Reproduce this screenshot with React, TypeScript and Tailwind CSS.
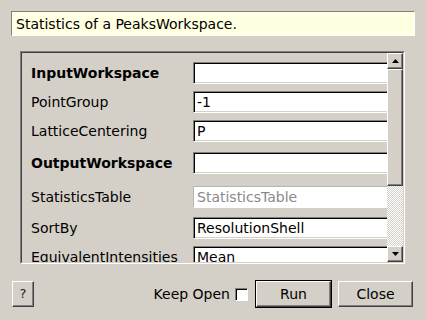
const rows = [
  { label: 'InputWorkspace', bold: true, value: '', disabled: false, mt: 'mt-[9px]' },
  { label: 'PointGroup', bold: false, value: '-1', disabled: false, mt: 'mt-[7px]' },
  { label: 'LatticeCentering', bold: false, value: 'P', disabled: false, mt: 'mt-[7px]' },
  { label: 'OutputWorkspace', bold: true, value: '', disabled: false, mt: 'mt-[10px]' },
  { label: 'StatisticsTable', bold: false, value: 'StatisticsTable', disabled: true, mt: 'mt-[12px]' },
  { label: 'SortBy', bold: false, value: 'ResolutionShell', disabled: false, mt: 'mt-[9px]' },
  { label: 'EquivalentIntensities', bold: false, value: 'Mean', disabled: false, mt: 'mt-[7px]' },
];

const raised =
  'border border-t-white border-l-white border-b-[#404040] border-r-[#404040] shadow-[inset_-1px_-1px_0_#808080] bg-[#d4d0c8]';

function Arrow({ down }: { down?: boolean }) {
  return (
    <div className={`${raised} w-[16px] h-[16px] shrink-0 flex items-center justify-center`}>
      <svg width="7" height="4" viewBox="0 0 7 4">
        <polygon points={down ? '0,0 7,0 3.5,4' : '3.5,0 7,4 0,4'} fill="#000" />
      </svg>
    </div>
  );
}

export default function App() {
  return (
    <div className="w-[426px] h-[320px] bg-[#d4d0c8] pt-[11px] px-[11px] font-['DejaVu_Sans',sans-serif] text-[14px] text-black overflow-hidden">
      {/* description */}
      <div className="h-[25px] bg-[#ffffe1] border border-t-[#808080] border-l-[#808080] border-b-white border-r-white pl-[4px] flex items-center leading-none">
        Statistics of a PeaksWorkspace.
      </div>

      {/* property scroll area */}
      <div className="mt-[15px] ml-[9px] w-[385px] h-[213px] border border-t-[#808080] border-l-[#808080] border-b-white border-r-white">
        <div className="h-full flex border border-t-[#404040] border-l-[#404040] border-b-[#d4d0c8] border-r-[#d4d0c8]">
          <div className="flex-1 overflow-hidden flex flex-col">
            {rows.map((r) => (
              <div key={r.label} className={`${r.mt} h-[22px] shrink-0 flex items-center`}>
                <div className={`w-[171px] shrink-0 pl-[9px] whitespace-nowrap leading-none ${r.bold ? 'font-bold' : ''}`}>
                  {r.label}
                </div>
                <div
                  className={
                    r.disabled
                      ? 'w-[220px] shrink-0 h-[22px] bg-white border border-t-[#b4b4b4] border-l-[#b4b4b4] border-b-white border-r-white pl-[3px] flex items-center text-[#8a8a8a] leading-none'
                      : 'w-[220px] shrink-0 h-[22px] bg-white border border-t-[#808080] border-l-[#808080] border-b-white border-r-white shadow-[inset_1px_1px_0_#000,inset_-1px_-1px_0_#d4d0c8] pl-[3px] flex items-center leading-none'
                  }
                >
                  {r.value}
                </div>
              </div>
            ))}
          </div>
          {/* scrollbar */}
          <div className="w-[16px] shrink-0 flex flex-col">
            <Arrow />
            <div className={`${raised} h-[117px] shrink-0`} />
            <div className="flex-1 bg-[repeating-conic-gradient(#ffffff_0_25%,#d4d0c8_0_50%)] bg-[length:2px_2px]" />
            <Arrow down />
          </div>
        </div>
      </div>

      {/* buttons */}
      <div className="mt-[16px] h-[28px] flex items-center -mx-[11px] pl-[12px] pr-[13px]">
        <div className={`${raised} w-[22px] h-[26px] flex items-center justify-center text-[13px] text-[#222]`}>?</div>
        <div className="flex-1" />
        <span className="leading-none">Keep Open</span>
        <div className="ml-[5px] w-[13px] h-[13px] bg-white border border-t-[#808080] border-l-[#808080] border-b-white border-r-white shadow-[inset_1px_1px_0_#000]" />
        <div className="ml-[7px] w-[77px] h-[28px] border border-black">
          <div className={`${raised} w-full h-full flex items-center justify-center leading-none`}>Run</div>
        </div>
        <div className={`${raised} ml-[6px] w-[75px] h-[26px] flex items-center justify-center leading-none`}>Close</div>
      </div>
    </div>
  );
}
